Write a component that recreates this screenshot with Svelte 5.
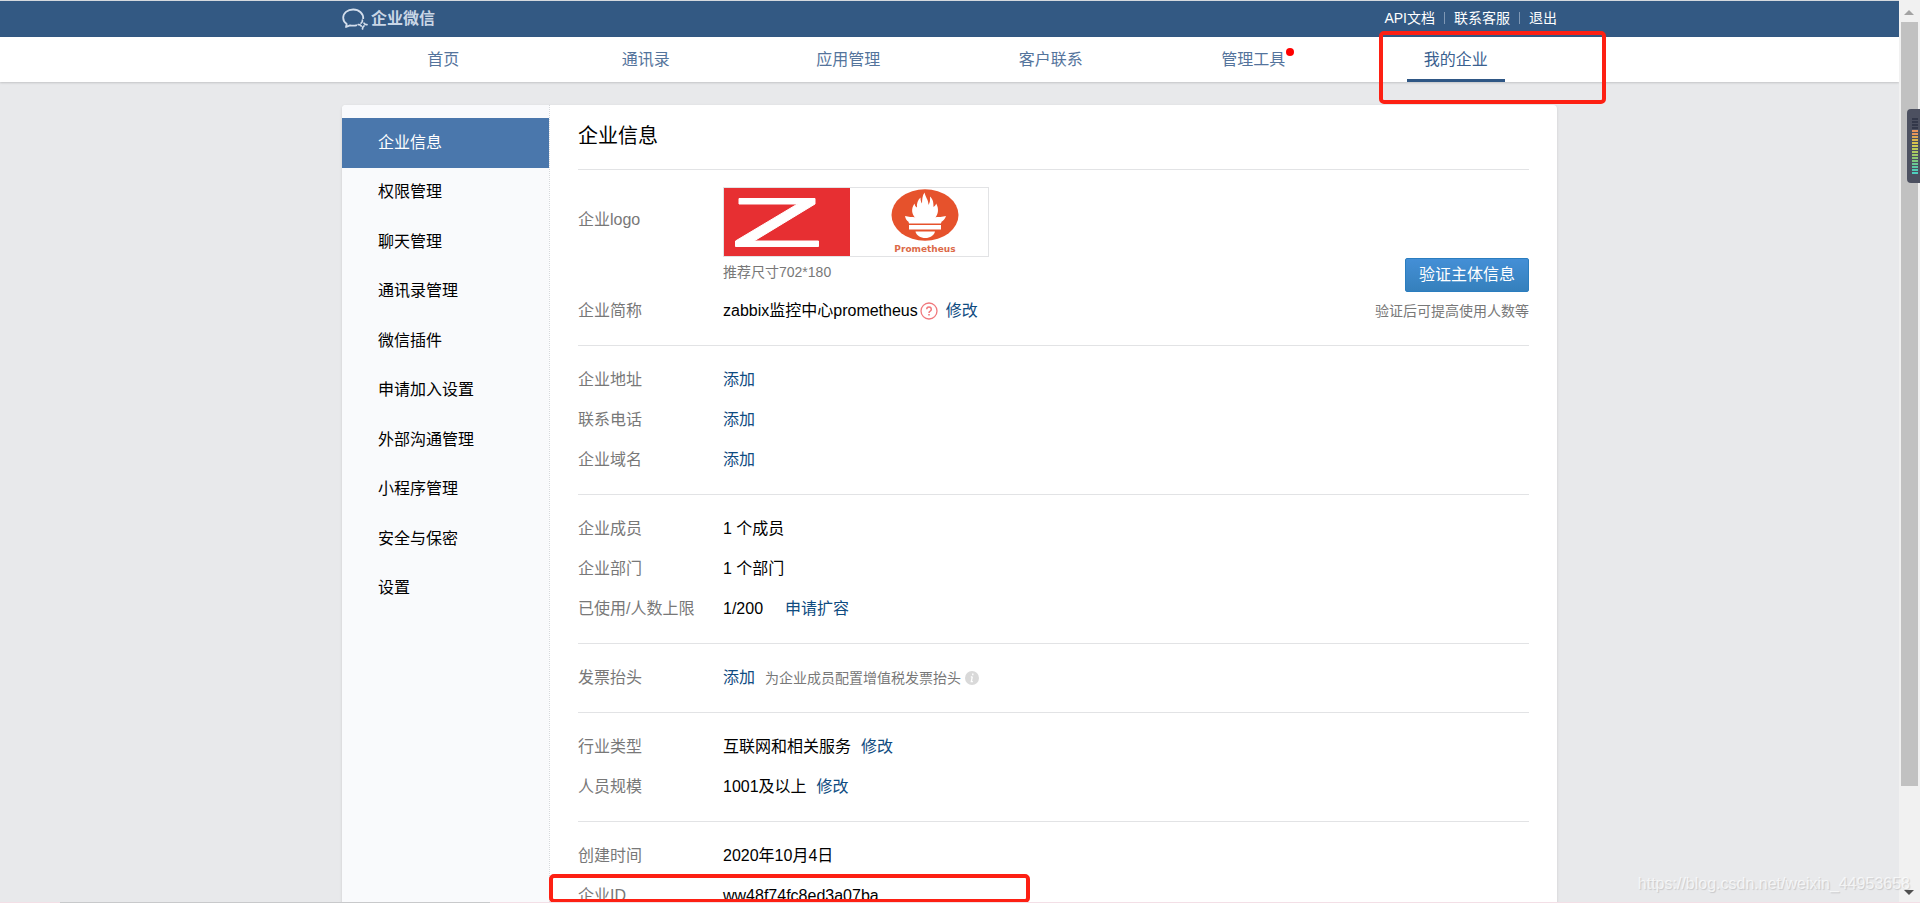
<script lang="ts">
  interface Row {
    label: string;
    value?: string;
    link?: string;
    wide?: boolean;
    note?: string;
    help?: boolean;
    marked?: boolean;
  }

  const navItems = [
    { text: '首页' },
    { text: '通讯录' },
    { text: '应用管理' },
    { text: '客户联系' },
    { text: '管理工具', dot: true },
    { text: '我的企业', active: true },
  ];

  const menuItems = [
    '企业信息',
    '权限管理',
    '聊天管理',
    '通讯录管理',
    '微信插件',
    '申请加入设置',
    '外部沟通管理',
    '小程序管理',
    '安全与保密',
    '设置',
  ];

  const sections: Row[][] = [
    [
      { label: '企业地址', link: '添加' },
      { label: '联系电话', link: '添加' },
      { label: '企业域名', link: '添加' },
    ],
    [
      { label: '企业成员', value: '1 个成员' },
      { label: '企业部门', value: '1 个部门' },
      { label: '已使用/人数上限', value: '1/200', link: '申请扩容', wide: true },
    ],
    [{ label: '发票抬头', link: '添加', note: '为企业成员配置增值税发票抬头' }],
    [
      { label: '行业类型', value: '互联网和相关服务', link: '修改' },
      { label: '人员规模', value: '1001及以上', link: '修改' },
    ],
    [
      { label: '创建时间', value: '2020年10月4日' },
      { label: '企业ID', value: 'ww48f74fc8ed3a07ba', marked: true },
    ],
  ];

  const meterBars = [
    '#33384a', '#33384a', '#33384a', '#33384a', '#e8935a', '#e8935a', '#dca653', '#d9b44c', '#d8c24c',
    '#cfc952', '#bccb58', '#aecb5f', '#9fca68', '#8cc971', '#7cc880', '#6ac893', '#5cc8a4', '#52cbb4', '#4ecfbe',
  ];
</script>

{#snippet infoRow(row: Row)}
  <div class="row">
    <dt class="label">{row.label}</dt>
    <dd class="value" class:wide={row.wide}>
      {#if row.value}<span>{row.value}</span>{/if}
      {#if row.help}
        <svg class="help-icon" width="18" height="18" viewBox="0 0 18 18" fill="none" stroke="#f0787c">
          <circle cx="9" cy="9" r="8" stroke-width="1.3" />
          <path d="M6.7 7.2a2.3 2.3 0 1 1 3.5 2C9.3 9.7 9 10 9 11" stroke-width="1.5" />
          <path d="M9 12v1.6" stroke-width="1.6" />
        </svg>
      {/if}
      {#if row.link}<a href="#edit">{row.link}</a>{/if}
      {#if row.note}
        <span class="note">
          {row.note}
          <svg width="14" height="14" viewBox="0 0 14 14">
            <circle cx="7" cy="7" r="7" fill="#d9d9d9" />
            <path d="M7.8 2.6v1.6M7.3 5.6 6.3 10.6h1.6M5.8 5.8h1.5" stroke="#fff" stroke-width="1.3" fill="none" />
          </svg>
        </span>
      {/if}
    </dd>
    {#if row.marked}<div class="mark id-mark"></div>{/if}
  </div>
{/snippet}

<div class="window">
  <div class="page">
    <header class="topbar">
      <div class="container topbar-inner">
        <a class="brand" href="#home">
          <svg width="27" height="22" viewBox="0 0 27 22" fill="none" stroke="#d3deec" stroke-width="1.8" stroke-linejoin="round">
            <path d="M21.200 11C21.800 5.600 17 1.500 11.200 1.500S1.200 5.200 1.200 9.800c0 2.500 1.300 4.700 3.500 6.200L4 19l4-1.700c2.300.6 4.800.5 7-.2" />
            <g stroke-width="1.700" stroke-linecap="round">
              <path d="M20.400 12.200c.3 1.500-.3 2.400-1.400 3" />
              <path d="M25 16.600c-1.500.3-2.400-.3-3-1.400" />
              <path d="M20.600 21c-.3-1.500.3-2.400 1.400-3" />
              <path d="M16.200 16.600c1.500-.3 2.400.3 3 1.400" />
            </g>
          </svg>
          <span>企业微信</span>
        </a>
        <nav class="links">
          <a href="#api">API文档</a>
          <a href="#service">联系客服</a>
          <a href="#logout">退出</a>
        </nav>
      </div>
    </header>

    <nav class="nav">
      <div class="container nav-inner">
        {#each navItems as item}
          <div class="nav-cell">
            <a class="nav-link" class:active={item.active} href="#nav">
              <span class="nav-text" class:dot={item.dot}>{item.text}</span>
            </a>
            {#if item.active}<div class="mark nav-mark"></div>{/if}
          </div>
        {/each}
      </div>
    </nav>

    <div class="container card">
      <aside class="menu">
        <nav class="menu-list">
          {#each menuItems as item, i}
            <a class="menu-item" class:active={i === 0} href="#menu">{item}</a>
          {/each}
        </nav>
      </aside>

      <main class="content">
        <h1>企业信息</h1>

        <section class="section profile">
          <dl>
            <div class="row logo-row">
              <dt class="label">企业logo</dt>
              <dd>
                <svg class="logo" width="264" height="68" viewBox="0 0 264 68">
                  <rect width="126" height="68" fill="#e72f32" />
                  <path
                    d="M15 10.500h76v5.500L30 53h64.500v5.500h-83v-5.500L73.500 16H15z"
                    fill="#fff" stroke="#fff" stroke-width="1" stroke-linejoin="round"
                  />
                  <ellipse cx="201" cy="27" rx="33.500" ry="25.800" fill="#e6522c" />
                  <g fill="#fff">
                    <path d="M191.500 30c-4-4-4.500-9.500-1-14.500.3 2 1 3.200 2.500 4-.5-4 .8-7.500 3.500-10 0 2.500.4 4.300 1.500 6 .2-4.500.2-7.500 2.500-11 .8 4.500 4 7 4 12.500 1.500-2.500 1.800-5 1.500-8.500 3.500 3 3.500 7 3.500 10.500 1.300-.8 2.300-2 2.700-3.500 2.800 5 2.300 10.500-1.200 14.500z" />
                    <path d="M181 28c3.500.8 7 1.200 10 1.200h20c3 0 7.500-.4 11-1.200-1 2.800-2.500 4.700-4.500 5.800l-.5 1.700h-32l-.5-1.700c-2-1.100-2.900-3-3.500-5.800z" />
                    <rect x="185" y="37" width="32" height="4.500" />
                    <path d="M191.500 43.500h19.500c-1 4-5 6.500-9.700 6.500s-9-2.500-9.800-6.500z" />
                  </g>
                  <text x="201" y="64" text-anchor="middle" class="logo-text">Prometheus</text>
                </svg>
                <p class="logo-tip">推荐尺寸702*180</p>
              </dd>
            </div>
            {@render infoRow({ label: '企业简称', value: 'zabbix监控中心prometheus', help: true, link: '修改' })}
          </dl>
          <div class="verify">
            <button type="button">验证主体信息</button>
            <p>验证后可提高使用人数等</p>
          </div>
        </section>

        {#each sections as rows}
          <section class="section">
            <dl>
              {#each rows as row}
                {@render infoRow(row)}
              {/each}
            </dl>
          </section>
        {/each}
      </main>
    </div>
  </div>

  <div class="scrollbar">
    <svg width="21" height="22" viewBox="0 0 21 22"><path d="M5 15h10l-5-5z" fill="#a3a3a3" /></svg>
    <div class="track"><div class="thumb"></div></div>
    <svg width="21" height="18" viewBox="0 0 21 18"><path d="M5 5h10l-5 5z" fill="#505050" /></svg>
  </div>

  <div class="meter">
    {#each meterBars as color}
      <i style:background={color}></i>
    {/each}
  </div>
  <div class="watermark">https://blog.csdn.net/weixin_44953658</div>
  <div class="bottom-edge"></div>
</div>

<style>
  :global(body) {
    margin: 0;
  }

  .window {
    position: relative;
    display: grid;
    grid-template-columns: 1fr 21px;
    height: 100vh;
    overflow: hidden;
    background: #e8e9eb;
    color: #000;
    font: 16px/40px 'Liberation Sans', 'Noto Sans CJK SC', sans-serif;
  }

  .page {
    min-width: 0;
    overflow: hidden;
  }

  .container {
    max-width: 1215px;
    margin: 0 auto;
  }

  a {
    color: #0f4c81;
    text-decoration: none;
  }

  h1,
  p,
  dl,
  dd {
    margin: 0;
  }

  /* Top bar */
  .topbar {
    border-top: 1px solid #d5d9de;
    background: #335983;
  }

  .topbar-inner {
    display: flex;
    align-items: center;
    justify-content: space-between;
    height: 36px;
  }

  .brand {
    display: flex;
    align-items: center;
    gap: 2px;
    color: #c9d6e6;
    font-weight: 700;
    line-height: 36px;
  }

  .links {
    display: flex;
    font-size: 14px;
    line-height: 34px;
    height: 36px;
  }

  .links a {
    color: #fff;
  }

  .links a + a::before {
    content: '';
    display: inline-block;
    width: 1px;
    height: 12px;
    margin: 0 9px;
    background: #7f98b5;
    vertical-align: -1px;
  }

  /* Main navigation */
  .nav {
    background: #fff;
    box-shadow: 0 1px 2px rgba(0, 0, 0, 0.16);
  }

  .nav-inner {
    display: grid;
    grid-template-columns: repeat(6, 1fr);
  }

  .nav-cell {
    position: relative;
    display: flex;
    justify-content: center;
  }

  .nav-link {
    box-sizing: border-box;
    height: 45px;
    padding: 0 17px;
    border-bottom: 3px solid transparent;
    color: #54749c;
    line-height: 46px;
  }

  .nav-link.active {
    border-color: #2f5785;
    color: #3a608f;
  }

  .nav-text {
    position: relative;
  }

  .nav-text.dot::after {
    content: '';
    position: absolute;
    top: -3px;
    right: -9px;
    width: 8px;
    height: 8px;
    border-radius: 50%;
    background: #f00;
  }

  /* Red highlight frames */
  .mark {
    position: absolute;
    box-sizing: border-box;
    border: 4px solid #fd2013;
    border-radius: 5px;
  }

  .nav-mark {
    top: -6px;
    left: 24px;
    z-index: 1;
    width: 227px;
    height: 73px;
  }

  .id-mark {
    top: -2px;
    left: -29px;
    width: 481px;
    height: 29px;
  }

  /* Card */
  .card {
    display: grid;
    grid-template-columns: 207px 1fr;
    margin-top: 23px;
    border-radius: 4px;
    background: #fff;
    box-shadow: 0 1px 3px rgba(0, 0, 0, 0.12);
  }

  .menu {
    padding-top: 13px;
    border-radius: 4px 0 0 4px;
    background: #f9fafc;
  }

  .menu-list {
    display: grid;
    grid-auto-rows: 1fr;
    height: 495px;
  }

  .menu-item {
    display: flex;
    align-items: center;
    padding-left: 36px;
    color: #000;
  }

  .menu-item.active {
    background: #4a77ac;
    color: #fff;
  }

  .content {
    padding: 0 28px;
    border-left: 1px dotted #d5d8dc;
  }

  h1 {
    height: 64px;
    font-size: 20px;
    font-weight: 400;
    line-height: 62px;
  }

  .section {
    padding: 14px 0;
    border-top: 1px solid #e2e3e5;
  }

  .profile {
    display: flex;
    justify-content: space-between;
  }

  .row {
    position: relative;
    display: grid;
    grid-template-columns: 145px 1fr;
  }

  .label {
    color: #787878;
  }

  .value {
    display: flex;
    align-items: center;
    gap: 10px;
  }

  .value.wide {
    gap: 22px;
  }

  .help-icon {
    margin: 0 -2px 0 -8px;
  }

  .note,
  .logo-tip,
  .verify p {
    color: #787878;
    font-size: 14px;
  }

  .note {
    display: flex;
    align-items: center;
    gap: 4px;
  }

  .logo-row {
    height: 107px;
  }

  .logo-row .label {
    line-height: 72px;
  }

  .logo {
    display: block;
    margin-top: 3px;
    border: 1px solid #e2e3e5;
  }

  .logo-text {
    fill: #dc6a48;
    font: bold 9px 'DejaVu Sans', sans-serif;
  }

  .logo-tip {
    line-height: 30px;
  }

  .verify {
    display: flex;
    flex-direction: column;
    align-items: flex-end;
    padding-top: 74px;
  }

  .verify button {
    height: 34px;
    padding: 0 13px;
    border: 1px solid #2a7dbf;
    border-radius: 2px;
    background: linear-gradient(#448fd6, #3580bc);
    color: #fff;
    font: inherit;
    line-height: 32px;
  }

  .verify p {
    line-height: 38px;
  }

  /* Window chrome */
  .scrollbar {
    display: flex;
    flex-direction: column;
    background: #f1f1f1;
  }

  .track {
    flex: 1;
    padding: 0 2px;
  }

  .thumb {
    height: 88.5%;
    background: #c1c1c1;
  }

  .meter {
    position: absolute;
    top: 109px;
    right: 0;
    display: flex;
    flex-direction: column;
    gap: 1px;
    box-sizing: border-box;
    width: 13px;
    height: 74px;
    padding: 9px 2px 0 5px;
    border-radius: 4px 0 0 4px;
    background: #4c5060;
  }

  .meter i {
    height: 2px;
  }

  .watermark {
    position: absolute;
    right: 10px;
    bottom: 8px;
    color: rgba(255, 255, 255, 0.7);
    line-height: 22px;
    text-shadow: 1px 1px 1px rgba(0, 0, 0, 0.14);
  }

  .bottom-edge {
    position: absolute;
    right: 0;
    bottom: 0;
    left: 0;
    height: 1px;
    background: linear-gradient(90deg, #f3dfe6 60px, #c8c9cb 60px 490px, #f3dfe6 490px);
  }
</style>
